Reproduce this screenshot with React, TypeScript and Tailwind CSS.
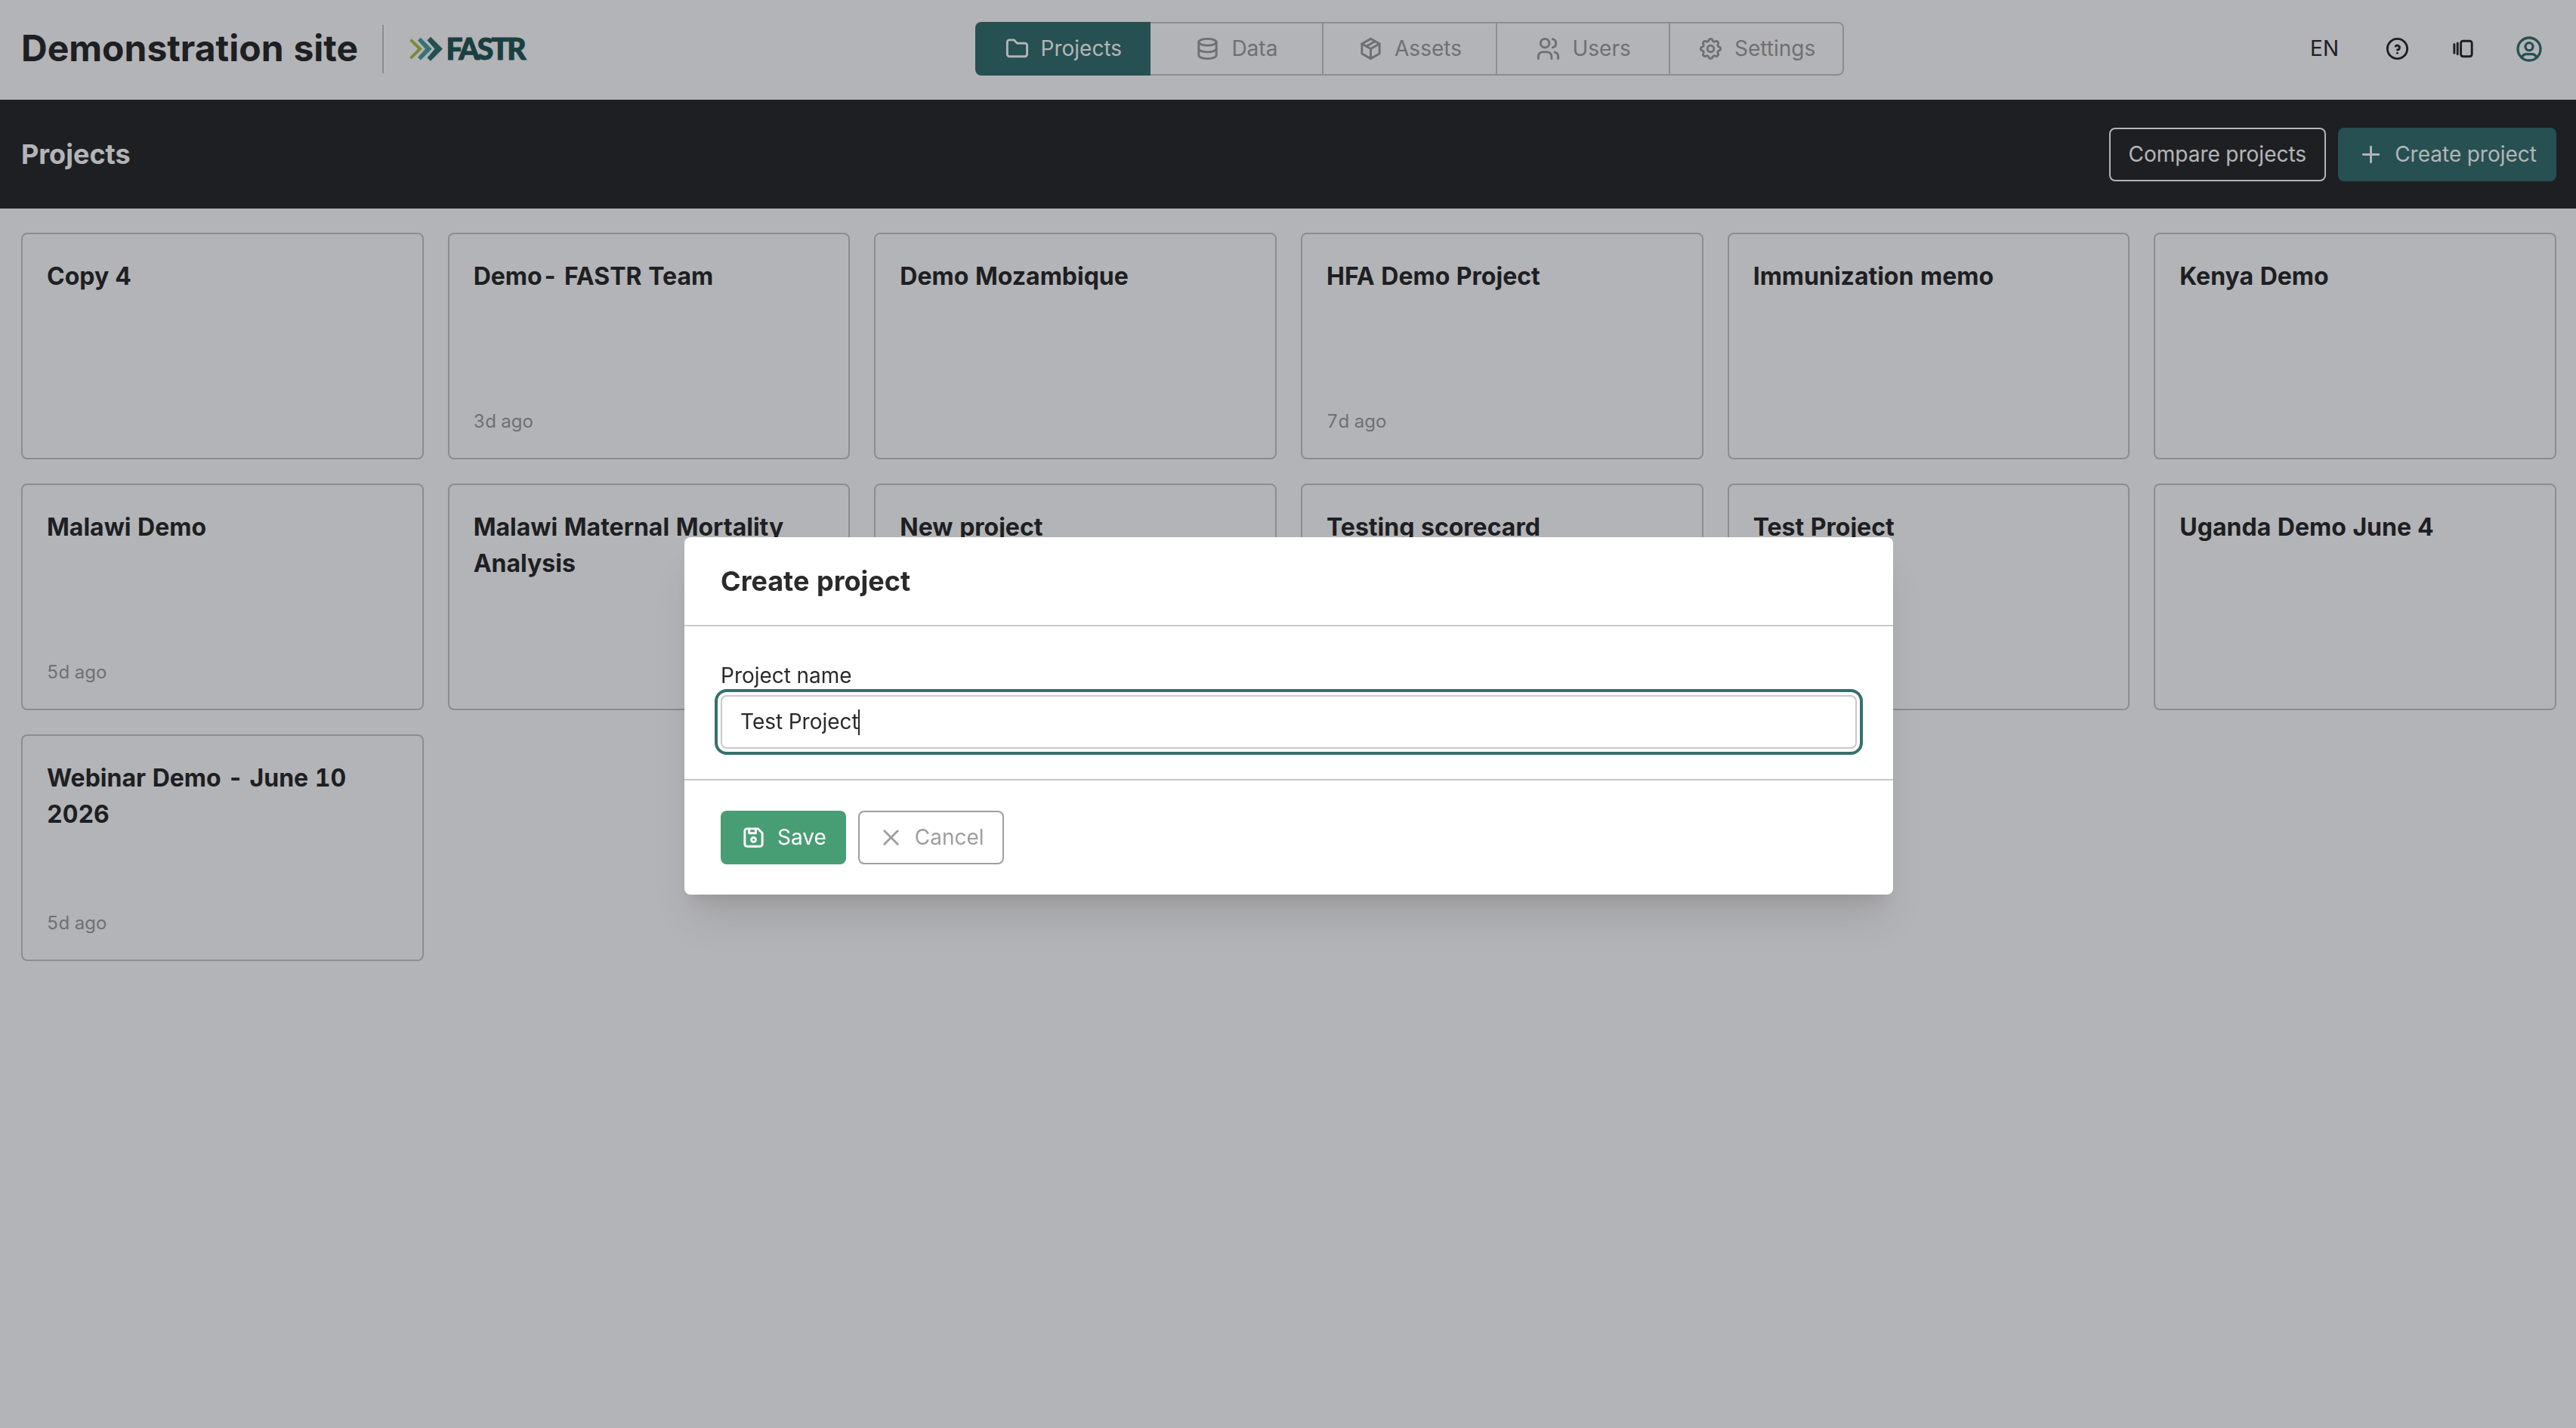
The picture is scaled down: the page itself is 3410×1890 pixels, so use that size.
import React from 'react';
import {
  TbFolder,
  TbDatabase,
  TbPackage,
  TbUsers,
  TbSettings,
  TbHelpCircle,
  TbVersions,
  TbUserCircle,
  TbPlus,
  TbX,
  TbDeviceFloppy,
} from 'react-icons/tb';
import type { IconType } from 'react-icons';

type Tab = { label: string; icon: IconType };
type Project = { name: string; updated?: string };

const tabs: Tab[] = [
  { label: 'Projects', icon: TbFolder },
  { label: 'Data', icon: TbDatabase },
  { label: 'Assets', icon: TbPackage },
  { label: 'Users', icon: TbUsers },
  { label: 'Settings', icon: TbSettings },
];

const projects: Project[] = [
  { name: 'Copy 4' },
  { name: 'Demo- FASTR Team', updated: '3d ago' },
  { name: 'Demo Mozambique' },
  { name: 'HFA Demo Project', updated: '7d ago' },
  { name: 'Immunization memo' },
  { name: 'Kenya Demo' },
  { name: 'Malawi Demo', updated: '5d ago' },
  { name: 'Malawi Maternal Mortality Analysis' },
  { name: 'New project' },
  { name: 'Testing scorecard' },
  { name: 'Test Project' },
  { name: 'Uganda Demo June 4' },
  { name: 'Webinar Demo - June 10 2026', updated: '5d ago' },
];

const Icon: React.FC<{ as: IconType; className?: string }> = ({ as: As, className = 'size-[35px]' }) => (
  <As className={`${className} shrink-0`} />
);

const Logo: React.FC = () => (
  <svg width="160" height="36" viewBox="0 0 160 36" overflow="visible">
    <path d="M2.8 4.3 L17 17.8 L2.8 31.3 L0.3 28.7 L11 17.8 L0.3 6.9 Z" fill="#b0c243" />
    <path d="M14.8 2.8 L29.7 17.8 L14.8 32.8 L11 29 L21 17.8 L11 6.6 Z" fill="#4ea3a0" />
    <path d="M28 1.8 L44 17.8 L28 33.8 L23.5 29.4 L33.5 17.8 L23.5 6.2 Z" fill="#35706e" />
    <text
      x="48.5"
      y="31.5"
      fontSize="39"
      fontWeight="900"
      textLength="106"
      lengthAdjust="spacing"
      fill="#265856"
      stroke="#265856"
      strokeWidth="1"
      className="font-['Lato',sans-serif]"
    >
      FASTR
    </text>
  </svg>
);

const Header: React.FC = () => (
  <header className="flex h-[132px] items-center pb-[3px] pl-7 pr-[26px]">
    <div className="flex w-[1263px] items-center">
      <h1 className="pb-0.5 text-[48px] leading-none font-bold">Demonstration site</h1>
      <div className="ml-8 h-16 w-0.5 bg-[#c8c8c8]" />
      <div className="ml-[34px]">
        <Logo />
      </div>
    </div>
    <nav className="flex h-[71px] w-[1150px]">
      {tabs.map((tab, i) => (
        <button
          key={tab.label}
          className={
            i === 0
              ? 'z-10 flex w-[231.6px] shrink-0 items-center justify-center gap-3.5 rounded-l-lg bg-[#35706e] text-white'
              : '-ml-0.5 flex w-[231.6px] shrink-0 items-center justify-center gap-3.5 border-2 border-[#c8c8c8] text-[#9e9e9e] last:rounded-r-lg'
          }
        >
          <Icon as={tab.icon} />
          <span className="pb-px">{tab.label}</span>
        </button>
      ))}
    </nav>
    <div className="ml-auto flex items-center pr-4">
      <span className="pb-px">EN</span>
      <Icon as={TbHelpCircle} className="ml-[60px] size-[35px]" />
      <Icon as={TbVersions} className="ml-[52px] size-[35px]" />
      <Icon as={TbUserCircle} className="ml-[50px] size-10 text-[#35706e]" />
    </div>
  </header>
);

const Toolbar: React.FC = () => (
  <div className="flex h-36 items-center justify-between bg-[#2a2a2a] pt-px pl-7 pr-[26px] text-white">
    <h2 className="pb-0.5 text-[36px] leading-none font-bold">Projects</h2>
    <div className="flex gap-4">
      <button className="flex h-[71px] items-center rounded-lg border-2 border-white px-6">
        <span className="pb-0.5">Compare projects</span>
      </button>
      <button className="flex h-[71px] items-center gap-3.5 rounded-lg bg-[#35706e] px-[26px]">
        <Icon as={TbPlus} />
        <span className="pb-0.5">Create project</span>
      </button>
    </div>
  </div>
);

const ProjectCard: React.FC<{ project: Project }> = ({ project }) => (
  <div className="flex h-[300px] flex-col justify-between rounded-lg border-2 border-[#c8c8c8] p-8">
    <div className="text-[32px] leading-[48px] font-bold">{project.name}</div>
    {project.updated && <div className="text-2xl leading-8 text-[#9e9e9e]">{project.updated}</div>}
  </div>
);

const CreateProjectModal: React.FC = () => (
  <div className="fixed inset-0 z-50 flex items-center justify-center bg-gray-950/30 pt-[5px] pl-0.5">
    <div className="w-[1600px] rounded-lg bg-white shadow-[0_40px_50px_-10px_rgba(0,0,0,0.1),0_16px_20px_-12px_rgba(0,0,0,0.1)]">
      <div className="flex h-[118px] items-center border-b-2 border-[#c8c8c8] px-12">
        <h2 className="text-[36px] leading-none font-bold">Create project</h2>
      </div>
      <div className="border-b-2 border-[#c8c8c8] px-12 py-10">
        <div className="h-[51px] leading-[51px]">Project name</div>
        <div className="flex h-[71px] items-center rounded-lg border-2 border-[#c8c8c8] px-6 outline-4 outline-offset-4 outline-[#35706e]">
          <span className="pb-px">Test Project</span>
          <span className="-ml-px h-[34px] w-0.5 bg-[#2a2a2a]" />
        </div>
      </div>
      <div className="flex gap-4 px-12 py-10">
        <button className="flex h-[71px] items-center gap-3.5 rounded-lg bg-[#489e74] px-[26px] text-white">
          <Icon as={TbDeviceFloppy} />
          <span className="pb-px">Save</span>
        </button>
        <button className="flex h-[71px] items-center gap-3.5 rounded-lg border-2 border-[#9e9e9e] px-6 text-[#9e9e9e]">
          <Icon as={TbX} />
          <span className="pb-px">Cancel</span>
        </button>
      </div>
    </div>
  </div>
);

const App: React.FC = () => {
  return (
    <div className="min-h-screen bg-white font-['Inter',sans-serif] text-[28px] leading-[42px] text-[#2a2a2a] tabular-nums [font-feature-settings:'calt'_0]">
      <Header />
      <Toolbar />
      <main className="grid grid-cols-6 gap-8 pt-8 pr-[26px] pl-7">
        {projects.map((project) => (
          <ProjectCard key={project.name} project={project} />
        ))}
      </main>
      <CreateProjectModal />
    </div>
  );
};

export default App;
